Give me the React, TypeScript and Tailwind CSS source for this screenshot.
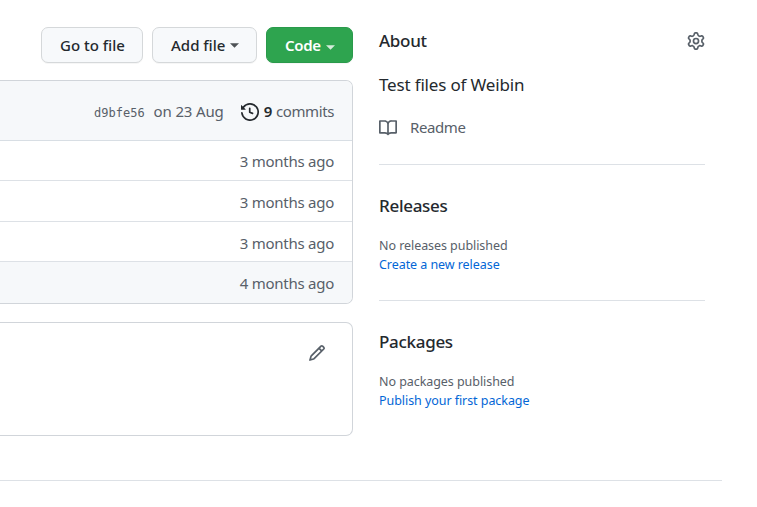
import type { ReactNode } from "react";

const icons = {
  book: "M0 1.75A.75.75 0 01.75 1h4.253c1.227 0 2.317.59 3 1.501A3.744 3.744 0 0111.006 1h4.245a.75.75 0 01.75.75v10.5a.75.75 0 01-.75.75h-4.507a2.25 2.25 0 00-1.591.659l-.622.621a.75.75 0 01-1.06 0l-.622-.621A2.25 2.25 0 005.258 13H.75a.75.75 0 01-.75-.75V1.75zm8.755 3a2.25 2.25 0 012.25-2.25H14.5v9h-3.757c-.71 0-1.4.201-1.992.572l.004-7.322zm-1.504 7.324l.004-5.073-.002-2.253A2.25 2.25 0 005.003 2.5H1.5v9h3.757a3.75 3.75 0 011.994.574z",
  history:
    "M1.643 3.143L.427 1.927A.25.25 0 000 2.104V5.75c0 .138.112.25.25.25h3.646a.25.25 0 00.177-.427L2.715 4.215a6.5 6.5 0 11-1.18 4.458.75.75 0 10-1.493.154 8.001 8.001 0 101.6-5.684zM7.75 4a.75.75 0 01.75.75v2.992l2.028.812a.75.75 0 01-.557 1.392l-2.5-1A.75.75 0 017 8.25v-3.5A.75.75 0 017.75 4z",
  pencil:
    "M11.013 1.427a1.75 1.75 0 012.474 0l1.086 1.086a1.75 1.75 0 010 2.474l-8.61 8.61c-.21.21-.47.364-.756.445l-3.251.93a.75.75 0 01-.927-.928l.929-3.25a1.75 1.75 0 01.445-.758l8.61-8.61zm1.414 1.06a.25.25 0 00-.354 0L10.811 3.75l1.439 1.44 1.263-1.263a.25.25 0 000-.354l-1.086-1.086zM11.189 6.25L9.75 4.81l-6.286 6.287a.25.25 0 00-.064.108l-.558 1.953 1.953-.558a.249.249 0 00.108-.064l6.286-6.286z",
  gear: "M7.429 1.525a6.593 6.593 0 011.142 0c.036.003.108.036.137.146l.289 1.105c.147.56.55.967.997 1.189.174.086.341.183.501.29.417.278.97.423 1.53.27l1.102-.303c.11-.03.175.016.195.046.219.31.41.641.573.989.014.031.022.11-.059.19l-.815.806c-.411.406-.562.957-.53 1.456a4.588 4.588 0 010 .582c-.032.499.119 1.05.53 1.456l.815.806c.08.08.073.159.059.19a6.494 6.494 0 01-.573.99c-.02.029-.086.074-.195.045l-1.103-.303c-.559-.153-1.112-.008-1.529.27-.16.107-.327.204-.5.29-.449.222-.851.628-.998 1.189l-.289 1.105c-.029.11-.101.143-.137.146a6.613 6.613 0 01-1.142 0c-.036-.003-.108-.037-.137-.146l-.289-1.105c-.147-.56-.55-.967-.997-1.189a4.502 4.502 0 01-.501-.29c-.417-.278-.97-.423-1.53-.27l-1.102.303c-.11.03-.175-.016-.195-.046a6.492 6.492 0 01-.573-.989c-.014-.031-.022-.11.059-.19l.815-.806c.411-.406.562-.957.53-1.456a4.587 4.587 0 010-.582c.032-.499-.119-1.05-.53-1.456l-.815-.806c-.08-.08-.073-.159-.059-.19a6.44 6.44 0 01.573-.99c.02-.029.086-.075.195-.045l1.103.303c.559.153 1.112.008 1.529-.27.16-.107.327-.204.5-.29.449-.222.851-.628.998-1.189l.289-1.105c.029-.11.101-.143.137-.146zM8 0c-.236 0-.47.01-.701.03-.743.065-1.29.615-1.458 1.261l-.29 1.106c-.017.066-.078.158-.211.224a5.994 5.994 0 00-.668.386c-.123.082-.233.09-.3.071L3.27 2.776c-.644-.177-1.392.02-1.82.63a7.977 7.977 0 00-.704 1.217c-.315.675-.111 1.422.363 1.891l.815.806c.05.048.098.147.088.294a6.084 6.084 0 000 .772c.01.147-.038.246-.088.294l-.815.806c-.474.469-.678 1.216-.363 1.891.2.428.436.835.704 1.218.428.609 1.176.806 1.82.63l1.103-.303c.066-.019.176-.011.299.071.213.143.436.272.668.386.133.066.194.158.212.224l.289 1.106c.169.646.715 1.196 1.458 1.26a8.094 8.094 0 001.402 0c.743-.064 1.29-.614 1.458-1.26l.29-1.106c.017-.066.078-.158.211-.224a5.98 5.98 0 00.668-.386c.123-.082.233-.09.3-.071l1.102.302c.644.177 1.392-.02 1.82-.63.268-.382.505-.789.704-1.217.315-.675.111-1.422-.364-1.891l-.814-.806c-.05-.048-.098-.147-.088-.294a6.1 6.1 0 000-.772c-.01-.147.039-.246.088-.294l.814-.806c.475-.469.679-1.216.364-1.891a7.992 7.992 0 00-.704-1.218c-.428-.609-1.176-.806-1.82-.63l-1.103.303c-.066.019-.176.011-.299-.071a5.991 5.991 0 00-.668-.386c-.133-.066-.194-.158-.212-.224L10.16 1.29C9.99.645 9.444.095 8.701.031A8.094 8.094 0 008 0zM9.5 8a1.5 1.5 0 11-3 0 1.5 1.5 0 013 0zM11 8a3 3 0 11-6 0 3 3 0 016 0z",
};

function Icon({ name, className }: { name: keyof typeof icons; className: string }) {
  return (
    <svg viewBox="0 0 16 16" fill="currentColor" fillRule="evenodd" className={"shrink-0 " + className}>
      <path d={icons[name]} />
    </svg>
  );
}

function Caret({ className }: { className: string }) {
  return (
    <svg viewBox="0 0 10 5" className={"h-[5px] w-[9px] shrink-0 opacity-80 " + className} fill="currentColor">
      <path d="M0 0h10L5 5z" />
    </svg>
  );
}

function Button({ className, children }: { className: string; children: ReactNode }) {
  return (
    <button
      className={
        "flex h-9 items-center rounded-[7px] border pl-[18px] text-[15px] font-medium whitespace-nowrap shadow-[0_1px_0_rgba(27,31,35,0.04)] " +
        className
      }
    >
      {children}
    </button>
  );
}

function Heading({ children }: { children: ReactNode }) {
  return (
    <h2 className="text-[17px] leading-7 font-[550] tracking-[-0.3px] text-[#24292e]">{children}</h2>
  );
}

function SidebarSection({ title, status, link }: { title: string; status: string; link: string }) {
  return (
    <section className="text-[12.5px] leading-[19px] tracking-[-0.06px]">
      <Heading>{title}</Heading>
      <p className="mt-4 text-[#586069]">{status}</p>
      <a className="block text-[#0366d6]">{link}</a>
    </section>
  );
}

const rows = [
  { age: "3 months ago", className: "h-[39px] pt-px" },
  { age: "3 months ago", className: "h-[41px] border-t pt-0.5" },
  { age: "3 months ago", className: "h-10 border-t pt-[3px]" },
  { age: "4 months ago", className: "h-[42px] border-t bg-[#f6f8fa] pt-px" },
];

export default function App() {
  return (
    <div className="h-[507px] w-[757px] overflow-hidden bg-white font-['Noto_Sans',sans-serif] text-[#24292e]">
      <div className="flex h-[480px]">
        <main className="w-[353px] shrink-0 pt-[27px]">
          <div className="flex justify-end gap-[9px]">
            <Button className="w-[102px] border-[#d5d8da] bg-[#f7f9fb]">Go to file</Button>
            <Button className="w-[105px] gap-[5px] border-[#d5d8da] bg-[#f7f9fb]">
              Add file <Caret className="" />
            </Button>
            <Button className="w-[87px] gap-[5px] border-[#2a9a4b] bg-[#2ea44f] font-semibold tracking-[-0.35px] text-white">
              Code <Caret className="mt-1" />
            </Button>
          </div>

          <div className="mt-[17px] h-[224px] overflow-hidden rounded-r-[7px] border border-l-0 border-[#d1d5da] text-[15px] tracking-[-0.25px] text-[#586069]">
            <div className="flex h-[60px] items-center justify-end border-b border-[#d8dee4] bg-[#f6f8fa] pt-0.5 pr-[18px]">
              <span className="mt-0.5 font-['DejaVu_Sans_Mono',monospace] text-[12px] tracking-normal">d9bfe56</span>
              <span className="ml-[9px] tracking-[-0.15px]">on 23 Aug</span>
              <Icon name="history" className="ml-[17px] size-[18px] text-[#24292e]" />
              <strong className="ml-[5px] font-semibold text-[#24292e]">9</strong>
              <span className="ml-1 tracking-[-0.4px]">commits</span>
            </div>
            {rows.map((row, i) => (
              <div
                key={i}
                className={"flex items-center justify-end border-[#dde1e6] pr-[18px] " + row.className}
              >
                {row.age}
              </div>
            ))}
          </div>

          <div className="mt-[18px] flex h-[114px] justify-end rounded-r-[7px] border border-l-0 border-[#d1d5da] pt-[21px] pr-[26px] text-[#586069]">
            <Icon name="pencil" className="size-[18px]" />
          </div>
        </main>

        <aside className="ml-[26px] w-[326px] pt-[27px]">
          <section className="h-[138px] border-b border-[#dde1e6]">
            <div className="flex items-start justify-between">
              <Heading>About</Heading>
              <Icon name="gear" className="mt-[5px] size-[18px] text-[#586069]" />
            </div>
            <p className="mt-4 text-[17px] leading-7 tracking-[-0.17px]">Test files of Weibin</p>
            <div className="mt-3.5 flex items-center text-[15px] leading-7 tracking-[-0.4px] text-[#586069]">
              <Icon name="book" className="mt-px size-[18px]" />
              <span className="ml-[13px]">Readme</span>
            </div>
          </section>
          <div className="h-[136px] border-b border-[#dde1e6] pt-[27px]">
            <SidebarSection title="Releases" status="No releases published" link="Create a new release" />
          </div>
          <div className="pt-[27px]">
            <SidebarSection title="Packages" status="No packages published" link="Publish your first package" />
          </div>
        </aside>
      </div>
      <footer className="w-[722px] border-t border-[#dde1e6]" />
    </div>
  );
}
